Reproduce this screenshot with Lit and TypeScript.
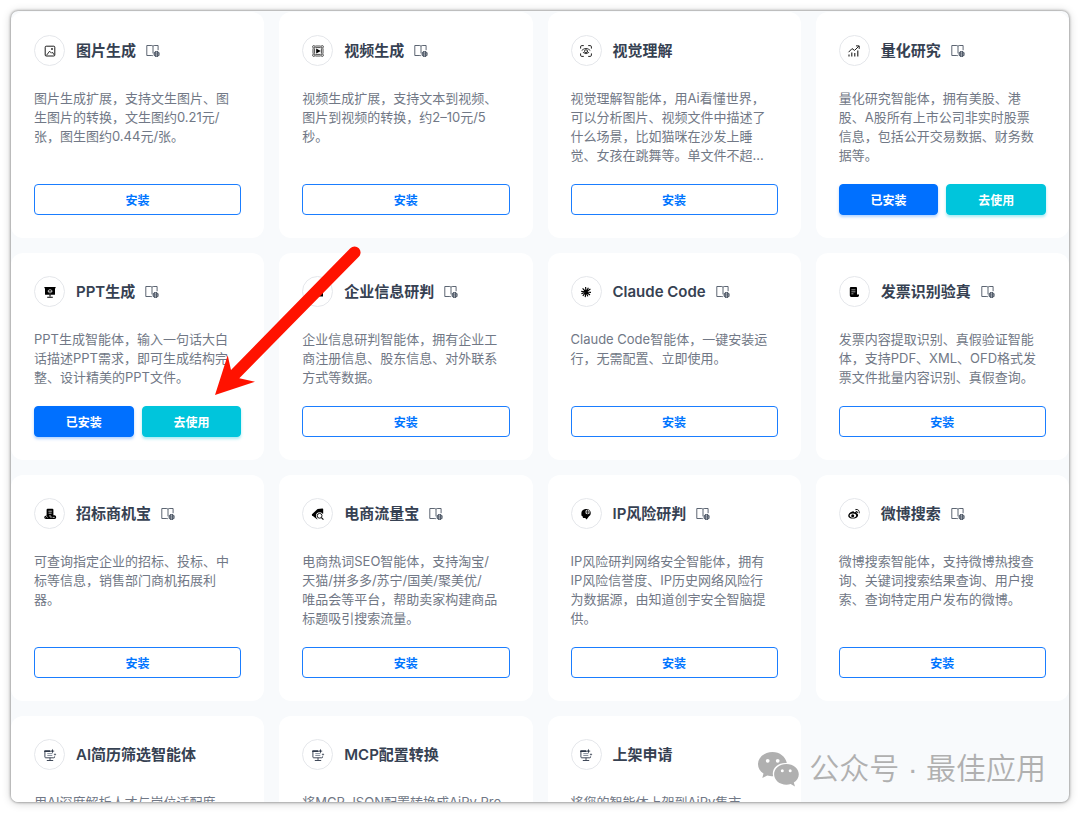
import { LitElement, html, svg, css } from "lit";
import { customElement, property } from "lit/decorators.js";

interface Agent {
  icon: string;
  title: string;
  text: string;
  docs?: boolean;
  state?: "installed" | "pending";
}

const AGENTS: Agent[] = [
  { icon: "picture", title: "图片生成", docs: true, text: "图片生成扩展，支持文生图片、图\n生图片的转换，文生图约0.21元/\n张，图生图约0.44元/张。" },
  { icon: "video", title: "视频生成", docs: true, text: "视频生成扩展，支持文本到视频、\n图片到视频的转换，约2–10元/5\n秒。" },
  { icon: "vision", title: "视觉理解", text: "视觉理解智能体，用Ai看懂世界，\n可以分析图片、视频文件中描述了\n什么场景，比如猫咪在沙发上睡\n觉、女孩在跳舞等。单文件不超..." },
  { icon: "chart", title: "量化研究", docs: true, state: "installed", text: "量化研究智能体，拥有美股、港\n股、A股所有上市公司非实时股票\n信息，包括公开交易数据、财务数\n据等。" },
  { icon: "slides", title: "PPT生成", docs: true, state: "installed", text: "PPT生成智能体，输入一句话大白\n话描述PPT需求，即可生成结构完\n整、设计精美的PPT文件。" },
  { icon: "company", title: "企业信息研判", docs: true, text: "企业信息研判智能体，拥有企业工\n商注册信息、股东信息、对外联系\n方式等数据。" },
  { icon: "burst", title: "Claude Code", docs: true, text: "Claude Code智能体，一键安装运\n行，无需配置、立即使用。" },
  { icon: "invoice", title: "发票识别验真", docs: true, text: "发票内容提取识别、真假验证智能\n体，支持PDF、XML、OFD格式发\n票文件批量内容识别、真假查询。" },
  { icon: "tender", title: "招标商机宝", docs: true, text: "可查询指定企业的招标、投标、中\n标等信息，销售部门商机拓展利\n器。" },
  { icon: "tag", title: "电商流量宝", docs: true, text: "电商热词SEO智能体，支持淘宝/\n天猫/拼多多/苏宁/国美/聚美优/\n唯品会等平台，帮助卖家构建商品\n标题吸引搜索流量。" },
  { icon: "head", title: "IP风险研判", docs: true, text: "IP风险研判网络安全智能体，拥有\nIP风险信誉度、IP历史网络风险行\n为数据源，由知道创宇安全智脑提\n供。" },
  { icon: "weibo", title: "微博搜索", docs: true, text: "微博搜索智能体，支持微博热搜查\n询、关键词搜索结果查询、用户搜\n索、查询特定用户发布的微博。" },
  { icon: "monitor", title: "AI简历筛选智能体", state: "pending", text: "用AI深度解析人才与岗位适配度" },
  { icon: "monitor", title: "MCP配置转换", state: "pending", text: "将MCP JSON配置转换成AiPy Pro" },
  { icon: "monitor", title: "上架申请", state: "pending", text: "将您的智能体上架到AiPy集市" },
];

const ICONS: Record<string, unknown> = {
  picture: svg`<g fill="none" stroke="#1c1c1c">
    <rect x="2.2" y="2.2" width="9.6" height="9.8" rx="1"/>
    <path d="M3.400 11.400 6.600 7.200l1.900 2 1-1 1.500 2.600" stroke-width="0.9"/></g>
    <circle cx="9" cy="5" r="0.9" fill="#1c1c1c"/>`,
  video: svg`<g fill="none" stroke="#222" stroke-width="0.800">
    <path d="M4.400 2h5.200M4.400 3.600h5.200M4.400 10.400h5.200M4.400 12h5.200M2 4.400v5.200M3.600 4.400v5.200M10.400 4.400v5.200M12 4.400v5.200"/>
    <circle cx="2.800" cy="2.800" r="1.200"/><circle cx="11.200" cy="2.800" r="1.200"/>
    <circle cx="2.800" cy="11.200" r="1.200"/><circle cx="11.200" cy="11.200" r="1.200"/></g>
    <path d="M5.200 4.400 9.800 7l-4.600 2.600z" fill="#000"/>`,
  vision: svg`<g fill="none" stroke="#222" stroke-linecap="round">
    <path d="M1.600 4.200V2.800q0-1.200 1.200-1.200h1.600M9.600 1.600h1.600q1.200 0 1.200 1.200v1.400M12.400 9.800v1.400q0 1.200-1.200 1.200H9.600M4.400 12.400H2.800q-1.200 0-1.200-1.200V9.800"/>
    <path d="M3 6.200Q7 2.400 11 6.200M4.200 8.600q2.800 2.600 5.600 0" stroke-width="0.9"/>
    <circle cx="7" cy="7.200" r="1.500" stroke-width="0.9"/></g>`,
  chart: svg`<g fill="none" stroke="#1c1c1c">
    <path d="M2 12.400v-2M4.800 12.400V8.600M7.800 12.400V9M10.800 12.400V6.400" stroke-width="1.100"/>
    <path d="M1.600 8.200 5 4.600l2.600 1.800 4.200-4.200"/><path d="M9 1.900h3.200v3"/></g>`,
  slides: svg`<path d="M1.400 2h11.200v1.200H12v6q0 .6-.6.6H2.600q-.6 0-.6-.6v-6h-.6z" fill="#000"/>
    <path d="M7 9.500v2M4.200 12.200h5.600" stroke="#000" stroke-width="1.100" fill="none"/>
    <path d="M5.500 5.200 7 4.400l1.600.8v2L7 8l-1.500-.8zM4.600 6.200h4.900" stroke="#ddd" stroke-width="0.700" fill="none"/>`,
  company: svg`<path d="M2.500 11.400V3.500L7.500 2v3L12 6.500v4.900z" fill="#000"/>`,
  burst: svg`<path d="M7 7 6.600 2M7 7l2.400-4.200M7 7l4.400-3M7 7l5 .4M7 7l4 3M7 7l1.800 4.400M7 7l-.8 5.200M7 7l-3.200 3.800M7 7 2.400 8.800M7 7l-4.800-.6M7 7 3.600 3.400" stroke="#000" stroke-width="1.150" fill="none"/>`,
  invoice: svg`<path d="M2.800 3.200Q2.800 2 4 2h5q1 0 1 1v6.400h2v1.200q0 1.400-1.400 1.400H4.200q-1.400 0-1.400-1.400z" fill="#000"/>
    <path d="M4.400 4.800h4M4.400 6.800h4M4.400 8.800h2" stroke="#ddd" stroke-width="0.700"/>`,
  tender: svg`<path d="M3.600 2.800q0-1 1-1h4.800q1 0 1 1v5.400h1.400q1.600.6 1.400 2.200-.2 1.600-2 1.600H3Q1.200 12 1.200 10.200q.2-1.600 2.400-1.800z" fill="#000"/>
    <path d="M5.400 4.200h3.400M5.600 6.200h3M2.600 10.400l1-.9 1 .9M6 9.200q1-1 2 0v1.800M9.600 10.400h2" stroke="#e4e4e4" stroke-width="0.800" fill="none"/>`,
  tag: svg`<path d="M1 7.200 6.600 2l4.800-.4q.8 0 .8.800v4.200L6.800 12q-.6.400-1.200 0L1 8.200q-.4-.5 0-1z" fill="#000"/>
    <circle cx="8.600" cy="8.800" r="2.600" fill="#fff" stroke="#fff" stroke-width="2"/>
    <path d="m10.400 10.600 2 2" stroke="#fff" stroke-width="2.400"/>
    <circle cx="8.600" cy="8.800" r="2.400" fill="#fff" stroke="#000" stroke-width="0.900"/>
    <path d="m10.400 10.600 2 2" stroke="#000" stroke-width="1.100"/>`,
  head: svg`<path d="M2.400 5.800Q2.800 2.400 6.600 2q4.800-.2 5.200 4 0 2.600-2 3.600l-2.200 3L6.200 11H4.400q-.8-.2-.7-1.600L2.400 8.600z" fill="#000"/>
    <circle cx="8.600" cy="5" r="2.300" fill="#ddd"/><path d="M6.600 5h4M8.600 3v4" stroke="#000" stroke-width="0.700"/>`,
  weibo: svg`<path d="M5.200 4.600q1.800-.8 1.900.7 3.100-.9 2.700 1.100 2 .7 1.200 2.500-1.500 2.700-5.200 2.700-4.300-.2-4.600-2.900.2-2.500 4-4.100z" fill="#000"/>
    <ellipse cx="5.900" cy="8.600" rx="3.200" ry="2.100" fill="#fff"/><circle cx="5.700" cy="8.700" r="1.500" fill="#000"/>
    <path d="M8.800 2.400q3.800-.4 3.500 3.500M9 4.200q1.800-.1 1.600 1.600" fill="none" stroke="#000" stroke-width="0.900" stroke-linecap="round"/>`,
  monitor: svg`<g fill="none" stroke="#2d3748" stroke-width="0.900">
    <path d="M7.600 3.400H1.400M1.900 3v6q0 .8.800.8h8.100q.8 0 .8-.8v-.6M7 9.800v2.500M3.800 12.500h6.400"/>
    <path d="M4.300 5.600h5M4.300 7.500h5" stroke="#7a8494"/></g>
    <path d="M1.400 2.300h5.800v1.600H1.400zM9.400.8l.6 1.700 1.700.6-1.700.6-.6 1.700-.6-1.700-1.700-.6 1.700-.6zM12 4.900l.4 1.100 1.100.4-1.100.4-.4 1.100-.4-1.100-1.100-.4 1.100-.4z" fill="#2d3748"/>`,
};

@customElement("agent-card")
class AgentCard extends LitElement {
  @property({ attribute: false }) agent!: Agent;

  static styles = css`
    :host {
      display: flex;
      flex-direction: column;
      min-width: 0;
      box-sizing: border-box;
      padding: 23px;
      border-radius: 12px;
      background: #fff;
    }
    .head {
      display: flex;
      align-items: center;
      height: 31px;
    }
    .badge {
      display: grid;
      place-items: center;
      flex: none;
      box-sizing: border-box;
      width: 31px;
      height: 31px;
      margin-right: 11px;
      border: 1px solid #e5e7eb;
      border-radius: 50%;
    }
    .badge svg {
      width: 14px;
      height: 14px;
    }
    .title {
      margin: 0;
      font-size: 15px;
      line-height: 23px;
      font-weight: 600;
      color: #364152;
      white-space: nowrap;
    }
    .docs {
      display: block;
      width: 14px;
      height: 14px;
      margin-left: 10px;
      color: #4b5563;
    }
    .docs svg {
      display: block;
      width: 14px;
      height: 14px;
    }
    .text {
      margin: 23px 0 19px;
      font-size: 13px;
      line-height: 19px;
      color: #717886;
      white-space: pre-line;
    }
    .actions {
      display: flex;
      gap: 8px;
      margin-top: auto;
    }
    .button {
      flex: 1;
      box-sizing: border-box;
      height: 31px;
      padding: 0;
      border: 1px solid #1a7dff;
      border-radius: 4px;
      background: #fff;
      color: #0075ff;
      font: inherit;
      font-size: 12px;
      font-weight: 700;
      cursor: pointer;
    }
    .primary {
      border-color: #0070ff;
      background: #0070ff;
      color: #fff;
      box-shadow: 0 2px 3px rgba(0, 112, 255, 0.3);
    }
    .accent {
      border-color: #00c5dc;
      background: #00c5dc;
      color: #fff;
      box-shadow: 0 2px 3px rgba(0, 197, 220, 0.35);
    }
  `;

  private renderActions() {
    switch (this.agent.state) {
      case "pending":
        return null;
      case "installed":
        return html`<div class="actions">
          <button class="button primary" type="button">已安装</button>
          <button class="button accent" type="button">去使用</button>
        </div>`;
      default:
        return html`<div class="actions"><button class="button" type="button">安装</button></div>`;
    }
  }

  render() {
    const { icon, title, text, docs } = this.agent;
    return html`
      <div class="head">
        <span class="badge"><svg viewBox="0 0 14 14" aria-hidden="true">${ICONS[icon]}</svg></span>
        <h2 class="title">${title}</h2>
        ${docs
          ? html`<a class="docs" href="#docs" aria-label=${title}>
              <svg viewBox="0 0 14 14" fill="none" stroke="currentColor" stroke-width="0.9">
                <path d="M7 2.400Q6.800 1.500 5.800 1.500H.800v10h5q1 0 1.200.500M7 2.400Q7.200 1.500 8.200 1.500h3.900v4.700M7 2.400v7" />
                <circle cx="10.600" cy="10" r="2.500" />
                <path d="M7.600 9.100h6M7.600 11h6M9.700 7v6M11.500 7v6" stroke-width="0.900" />
              </svg>
            </a>`
          : null}
      </div>
      <p class="text">${text}</p>
      ${this.renderActions()}
    `;
  }
}

@customElement("app-root")
class AppRoot extends LitElement {
  static styles = css`
    :host {
      display: block;
      position: relative;
      box-sizing: border-box;
      height: 100vh;
      padding: 11px;
      overflow: hidden;
      background: #fff;
      font-family: Inter, "Noto Sans CJK SC", sans-serif;
    }
    .window {
      box-sizing: border-box;
      height: 100%;
      padding-top: 1px;
      overflow: hidden;
      border-radius: 7px;
      background: #f8fafc;
      box-shadow: 0 0 3px rgba(0, 0, 0, 0.55), 0 1px 10px rgba(0, 0, 0, 0.2);
    }
    .grid {
      display: grid;
      grid-template-columns: repeat(4, minmax(0, 1fr));
      gap: 15px;
    }
    .arrow {
      position: absolute;
      left: 210px;
      top: 240px;
      width: 160px;
      height: 160px;
      pointer-events: none;
    }
    .watermark {
      position: absolute;
      right: 34px;
      bottom: 22px;
      display: flex;
      align-items: center;
      gap: 10px;
      color: #b0b0b0;
      font-family: "Liberation Sans", "Noto Sans CJK SC", sans-serif;
      font-size: 30px;
      line-height: 44px;
      font-weight: 350;
      white-space: pre;
    }
    .watermark svg {
      width: 41px;
      height: 35px;
    }
  `;

  render() {
    return html`
      <main class="window">
        <div class="grid">${AGENTS.map((a) => html`<agent-card .agent=${a}></agent-card>`)}</div>
      </main>
      <svg class="arrow" viewBox="210 240 160 160" aria-hidden="true">
        <path
          d="M215 395 227.700 355.300 231 370 350.300 248.200A6 6 0 0 1 358.800 256.800L239.300 378.300 255 381.700Z"
          fill="#ff1200"
        />
      </svg>
      <div class="watermark">
        <svg viewBox="0 0 41 35" fill="currentColor" aria-hidden="true">
          <path fill-rule="evenodd" d="M14.500 0C6.500 0 0 5.400 0 12.200c0 3.900 2.100 7.200 5.500 9.400L4.300 26l5-2.600c1.800.5 3.600.8 5.900.8-.3-.9-.4-1.700-.4-2.600 0-6.100 5.500-10.500 12.500-10.500h1.500C27.700 4.800 21.700 0 14.500 0zM9.700 6.900a1.900 1.900 0 1 1 0 3.800 1.900 1.900 0 0 1 0-3.800zm10 0a1.900 1.900 0 1 1 0 3.800 1.900 1.900 0 0 1 0-3.800z"/>
          <path fill-rule="evenodd" d="M28.400 12c-6.900 0-12.300 4.500-12.300 10.300s5.400 10.400 12.300 10.400c1.500 0 2.900-.2 4.300-.7l4.300 2.500-1.200-3.900c3.100-2 5-4.900 5-8.300C40.800 16.500 35.300 12 28.400 12zM24.300 17.300a1.500 1.500 0 1 1 0 3 1.500 1.500 0 0 1 0-3zm7.900 0a1.500 1.500 0 1 1 0 3 1.500 1.500 0 0 1 0-3z"/>
        </svg>
        <span>公众号 · 最佳应用</span>
      </div>
    `;
  }
}
